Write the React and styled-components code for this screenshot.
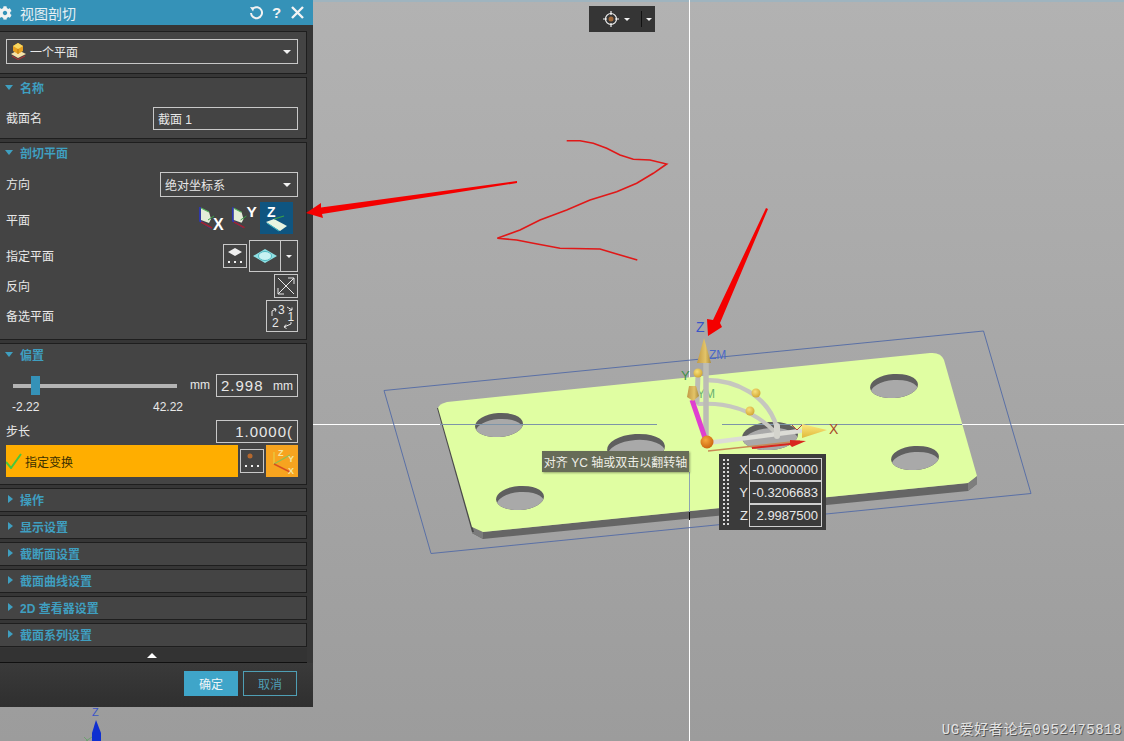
import React from 'react';
import styled, { createGlobalStyle } from 'styled-components';
import { FaCog } from 'react-icons/fa';

const GlobalStyle = createGlobalStyle`
  html, body {
    margin: 0;
    padding: 0;
    background: #a8a8a8;
    overflow: hidden;
  }
`;

const UI_FONT = `"Liberation Sans", "Noto Sans CJK SC", sans-serif`;

const Stage = styled.div`
  position: relative;
  width: 1124px;
  height: 741px;
  overflow: hidden;
  background: linear-gradient(#b2b2b2, #9c9c9c);
  font-family: ${UI_FONT};
`;

const SceneSvg = styled.svg`
  position: absolute;
  left: 0;
  top: 0;
  z-index: ${(p) => p.$z || 0};
  pointer-events: none;
`;

const Panel = styled.div`
  position: absolute;
  left: 0;
  top: 0;
  z-index: 2;
  width: 313px;
  height: 707px;
  background: #363636;
  display: flex;
  flex-direction: column;
  color: #e4e4e4;
  font-size: 12px;
`;

const TitleBar = styled.div`
  height: 25px;
  flex: none;
  background: #3592b8;
  display: flex;
  align-items: center;
  padding: 0 5px 0 0;
  color: #e6f0f4;
`;

const Gear = styled(FaCog)`
  width: 14px;
  height: 14px;
  margin-left: -2px;
  margin-right: 8px;
  color: #f2f2f2;
`;

const TitleText = styled.span`
  font-size: 14px;
  flex: 1;
`;

const TitleTool = styled.span`
  width: 21px;
  display: flex;
  justify-content: center;
  font-size: 15px;
  font-weight: 700;
  color: #f2f2f2;
`;

const Body = styled.div`
  flex: none;
  height: 623px;
  padding: 6px 0 0 0;
  box-sizing: border-box;
  display: flex;
  flex-direction: column;
  gap: 3px;
`;

const Section = styled.div`
  box-sizing: border-box;
  width: 308px;
  margin-left: -1px;
  height: ${(p) => p.$h}px;
  flex: none;
  border: 1px solid #1e1e1e;
  background: #444444;
  padding-left: 6px;
  padding-right: 8px;
`;

const SectionHead = styled.div`
  box-sizing: border-box;
  height: ${(p) => p.$h || 21}px;
  padding-bottom: 2px;
  display: flex;
  align-items: center;
  margin-left: -3px;
  color: #3f9fc0;
  font-weight: 700;
  font-size: 12px;
`;

const Caret = styled.span`
  display: inline-block;
  width: 0;
  height: 0;
  margin-right: 7px;
  ${(p) =>
    p.$open
      ? `border-left: 4px solid transparent; border-right: 4px solid transparent; border-top: 5px solid #3f9fc0; margin-left: 2px;`
      : `border-top: 4px solid transparent; border-bottom: 4px solid transparent; border-left: 5px solid #3f9fc0; margin-left: 5px;`}
`;

const Row = styled.div`
  height: ${(p) => p.$h}px;
  margin-top: ${(p) => p.$top || 0}px;
  display: flex;
  align-items: center;
  justify-content: space-between;
`;

const Group = styled.div`
  display: flex;
  align-items: ${(p) => p.$align || 'center'};
  gap: ${(p) => p.$gap || 0}px;
`;

const Label = styled.span`
  font-size: 12px;
  color: #e8e8e8;
  margin-bottom: ${(p) => (p.$low ? 0 : 2)}px;
  margin-top: ${(p) => (p.$low ? 3 : 0)}px;
`;

const Field = styled.div`
  box-sizing: border-box;
  width: ${(p) => p.$w}px;
  height: ${(p) => p.$h || 23}px;
  border: 1px solid #c8c8c8;
  display: flex;
  align-items: center;
  padding: 0 4px;
  justify-content: ${(p) => (p.$right ? 'flex-end' : 'flex-start')};
  color: #e8e8e8;
  font-size: 12px;
  overflow: hidden;
  white-space: nowrap;
`;

const NumberText = styled.span`
  font-size: 15px;
  letter-spacing: 1px;
  font-weight: 300;
`;

const SmallUnit = styled.span`
  font-size: 12px;
  margin-left: auto;
`;

const Select = styled(Field)`
  justify-content: space-between;
  padding-right: 6px;
`;

const SelectValue = styled.span`
  display: flex;
  align-items: center;
  gap: 4px;
`;

const DownTri = styled.span`
  width: 0;
  height: 0;
  border-left: ${(p) => p.$s || 4}px solid transparent;
  border-right: ${(p) => p.$s || 4}px solid transparent;
  border-top: ${(p) => p.$s || 4}px solid #f2f2f2;
`;

const IconBox = styled.div`
  box-sizing: border-box;
  width: ${(p) => p.$w}px;
  height: ${(p) => p.$h}px;
  border: 1px solid #c8c8c8;
  display: flex;
  align-items: center;
  justify-content: center;
  flex: none;
`;

const PlaneBtn = styled.div`
  width: ${(p) => p.$w}px;
  height: 32px;
  display: flex;
  align-items: center;
  justify-content: center;
  background: ${(p) => (p.$active ? '#0f5580' : 'transparent')};
`;

const Split = styled.div`
  box-sizing: border-box;
  width: 49px;
  height: 32px;
  border: 1px solid #c8c8c8;
  display: flex;
`;

const SplitMain = styled.div`
  flex: 1;
  display: flex;
  align-items: center;
  justify-content: center;
  border-right: 1px solid #c8c8c8;
`;

const SplitDrop = styled.div`
  width: 16px;
  display: flex;
  align-items: center;
  justify-content: center;
`;

const Slider = styled.div`
  position: relative;
  width: 164px;
  height: 4px;
  margin-left: 7px;
  background: #b4b4b4;
`;

const Thumb = styled.div`
  position: absolute;
  left: 18px;
  top: -8px;
  width: 9px;
  height: 19px;
  background: #3592b8;
`;

const RangeRow = styled.div`
  height: 19px;
  display: flex;
  align-items: center;
  padding-left: 6px;
  font-size: 12px;
  color: #e8e8e8;
`;

const RangeMin = styled.span`
  width: 141px;
`;

const StepBar = styled.div`
  width: 232px;
  height: 32px;
  background: #ffae00;
  display: flex;
  align-items: center;
  gap: 3px;
  color: #3a3000;
  font-size: 12px;
`;

const OrangeBtn = styled.div`
  width: 32px;
  height: 32px;
  background: #f7a41f;
  display: flex;
  align-items: center;
  justify-content: center;
`;

const ScrollStrip = styled.div`
  flex: none;
  height: 14px;
  display: flex;
  justify-content: center;
  align-items: center;
  border-bottom: 1px solid #101010;
  margin-right: 6px;
  padding-right: 4px;
  background: #333333;
`;

const UpTri = styled.span`
  width: 0;
  height: 0;
  border-left: 5px solid transparent;
  border-right: 5px solid transparent;
  border-bottom: 5px solid #ffffff;
`;

const Footer = styled.div`
  flex: 1;
  display: flex;
  justify-content: flex-end;
  gap: 5px;
  padding: 8px 16px 0 0;
  background: linear-gradient(#3a3a3a, #2f2f2f);
`;

const DialogBtn = styled.div`
  box-sizing: border-box;
  width: 54px;
  height: 25px;
  display: flex;
  align-items: center;
  justify-content: center;
  font-size: 12px;
  background: ${(p) => (p.$primary ? '#3fa5c9' : 'transparent')};
  border: 1px solid ${(p) => (p.$primary ? '#3fa5c9' : '#4f9fb5')};
  color: ${(p) => (p.$primary ? '#f0f6f8' : '#4f9fb5')};
`;

const MiniToolbar = styled.div`
  position: absolute;
  left: 589px;
  top: 6px;
  width: 66px;
  height: 26px;
  background: #353535;
  display: flex;
  align-items: center;
  z-index: 1;
`;

const MiniMain = styled.div`
  width: 50px;
  height: 16px;
  display: flex;
  align-items: center;
  justify-content: center;
  gap: 5px;
  border-right: 1px solid #111;
  padding-left: 2px;
`;

const MiniDrop = styled.div`
  flex: 1;
  display: flex;
  justify-content: center;
`;

const Tooltip = styled.div`
  position: absolute;
  left: 542px;
  top: 451px;
  width: 147px;
  height: 21px;
  background: #676c58;
  box-shadow: 1px 1px 2px rgba(0, 0, 0, 0.35);
  color: #eeeee6;
  font-size: 12px;
  display: flex;
  align-items: center;
  justify-content: center;
  white-space: nowrap;
  z-index: 1;
`;

const CoordBox = styled.div`
  position: absolute;
  left: 719px;
  top: 454px;
  width: 107px;
  height: 76px;
  box-sizing: border-box;
  background: #3b3b3b;
  display: flex;
  padding: 4px 4px 3px 3px;
  z-index: 1;
`;

const Grip = styled.div`
  width: 8px;
  background-image: radial-gradient(circle, #d8d8d8 1px, transparent 1.2px);
  background-size: 4px 4px;
`;

const CoordRows = styled.div`
  flex: 1;
  display: flex;
  flex-direction: column;
`;

const CoordRow = styled.div`
  flex: 1;
  display: flex;
  align-items: center;
  color: #e8e8e8;
  font-size: 13px;
`;

const CoordLabel = styled.span`
  width: 19px;
  text-align: right;
  margin-right: 1px;
`;

const CoordValue = styled.div`
  box-sizing: border-box;
  width: 73px;
  height: 100%;
  border: 1px solid #cfcfcf;
  margin-top: ${(p) => (p.$first ? 0 : -1)}px;
  display: flex;
  align-items: center;
  justify-content: flex-end;
  padding-right: 3px;
  background: #3b3b3b;
`;

const Watermark = styled.div`
  position: absolute;
  right: 2px;
  bottom: 3px;
  z-index: 1;
  font-family: "Liberation Mono", "Noto Sans CJK SC", monospace;
  font-size: 14px;
  letter-spacing: 0.55px;
  color: #e4e4e4;
  text-shadow: 1px 1px 0 #555;
  white-space: nowrap;
`;

// model holes: top rim ellipse plus a shifted floor
const HOLES = [
  { id: 'h1', x: 499, y: 425, rx: 24, ry: 12 },
  { id: 'h2', x: 636, y: 448, rx: 29, ry: 14 },
  { id: 'h3', x: 520, y: 498, rx: 24, ry: 12 },
  { id: 'h4', x: 894, y: 386, rx: 24, ry: 12 },
  { id: 'h5', x: 915, y: 458, rx: 24, ry: 12 },
  { id: 'h6', x: 770, y: 436, rx: 28, ry: 14 },
];

const Hole = ({ id, x, y, rx, ry }) => (
  <g transform={`rotate(-4 ${x} ${y})`}>
    <clipPath id={id}>
      <ellipse cx={x} cy={y} rx={rx} ry={ry} />
    </clipPath>
    <ellipse cx={x} cy={y} rx={rx} ry={ry} fill="#5f5f5f" />
    <ellipse cx={x} cy={y + 6} rx={rx} ry={ry} fill="#a9a9a9" clipPath={`url(#${id})`} />
  </g>
);

const Scene = () => (
  <SceneSvg width="1124" height="741" viewBox="0 0 1124 741">
    <defs>
      <linearGradient id="cone" x1="0" x2="1" y1="0" y2="0">
        <stop offset="0" stopColor="#c29a45" />
        <stop offset="0.6" stopColor="#e3c468" />
        <stop offset="1" stopColor="#a98a3e" />
      </linearGradient>
      <linearGradient id="conex" x1="0" x2="0" y1="0" y2="1">
        <stop offset="0" stopColor="#fbe97e" />
        <stop offset="1" stopColor="#e0b83c" />
      </linearGradient>
      <radialGradient id="ball" cx="0.4" cy="0.35" r="0.7">
        <stop offset="0" stopColor="#f6a83c" />
        <stop offset="1" stopColor="#c9610c" />
      </radialGradient>
      <radialGradient id="bead" cx="0.4" cy="0.35" r="0.7">
        <stop offset="0" stopColor="#f8e07a" />
        <stop offset="1" stopColor="#d0a430" />
      </radialGradient>
    </defs>

    <rect x="0" y="0" width="1124" height="2" fill="#9fb4bf" />
    <line x1="689.5" y1="0" x2="689.5" y2="741" stroke="#ffffff" strokeWidth="1" />
    <line x1="313" y1="424.5" x2="1124" y2="424.5" stroke="#ffffff" strokeWidth="1" />

    <polygon points="472,525 483,532 968,483 977,476 977,484 968,491 483,539 472,533" fill="#656565" />
    <polygon points="472,526 483,532 483,539 472,533" fill="#7a7a7a" />
    <polygon points="968,483 977,476 977,484 968,491" fill="#7d7d7d" />
    <path d="M437 408 L472 532 L474 532 L439 408 Z" fill="#4a4a4a" />
    <path
      d="M438 408 Q439 404 447 402 L930 353 Q941 352 944 360 L977 476 L968 483 L483 532 L472 527 Z"
      fill="#e0fea2"
    />
    {HOLES.map((h) => (
      <Hole key={h.id} {...h} />
    ))}

    <line x1="440" y1="424.5" x2="657" y2="424.5" stroke="#7d94a8" strokeWidth="1" />
    <line x1="722" y1="424.5" x2="962" y2="424.5" stroke="#7d94a8" strokeWidth="1" />
    <line x1="689.5" y1="472" x2="689.5" y2="512" stroke="#8da4b0" strokeWidth="1" />
    <line x1="689.5" y1="512" x2="689.5" y2="520" stroke="#111" strokeWidth="1" />
    <polygon points="384,390.5 983.5,331 1031,493.5 431,553.5" fill="none" stroke="#5a70a6" strokeWidth="1" />

    <text x="696" y="332" fontSize="14" fill="#3a55c8" fontFamily="Liberation Sans">Z</text>
    <text x="709" y="359" fontSize="12" fill="#4a68c8" fontFamily="Liberation Sans">ZM</text>
    <text x="681" y="380" fontSize="13" fill="#3f8f4a" fontFamily="Liberation Sans">Y</text>
    <text x="697" y="398" fontSize="12" fill="#6ab070" fontFamily="Liberation Sans">YM</text>
    <text x="829" y="434" fontSize="14" fill="#a84a28" fontFamily="Liberation Sans">X</text>

    <g fill="none" strokeLinecap="round">
      <path d="M706 380 C735 380 768 395 777 428" stroke="#c6c6bf" strokeWidth="4.5" />
      <path d="M699 404 C730 402 755 412 774 431" stroke="#c6c6bf" strokeWidth="4" />
      <path d="M698 375 L697 402" stroke="#bcbcb5" strokeWidth="5" />
      <path d="M706 358 L706 440" stroke="#bcbcb5" strokeWidth="5.5" />
      <path d="M707 443 L800 431" stroke="#dcdcd6" strokeWidth="4.5" />
      <path d="M777 426 L777 436" stroke="#d4d4cd" strokeWidth="6" />
    </g>
    <path d="M692 400 L705 438" stroke="#df3fd0" strokeWidth="5" fill="none" />
    <path d="M708 451 L800 441" stroke="#c98a55" strokeWidth="1.5" fill="none" />
    <path d="M752 447 L790 443 L790 440 L806 441 L792 447 L790 445 L752 449 Z" fill="#d8261e" />
    <path d="M792 425 L797 430 L802 425" stroke="#b5423a" strokeWidth="1" fill="none" />
    <polygon points="704,338 711,363 697,363" fill="url(#cone)" />
    <polygon points="689,386 696,386 699,396 693,401 687,397" fill="url(#cone)" />
    <polygon points="802,424 827,430 802,438" fill="url(#conex)" />
    <circle cx="698" cy="373" r="4.5" fill="url(#bead)" />
    <circle cx="756" cy="393" r="4.5" fill="url(#bead)" />
    <circle cx="750" cy="411" r="4.5" fill="url(#bead)" />
    <circle cx="707" cy="442" r="6.5" fill="url(#ball)" />

    <text x="92" y="716" fontSize="11" fill="#3a55c8" fontFamily="Liberation Sans">Z</text>
    <path d="M96 720 L101 733 L101 741 L92 741 L92 733 Z" fill="#0f2fd0" />
    <path d="M84 737 L88 741 M92 737 L86 741" stroke="#6fa070" strokeWidth="1" />
  </SceneSvg>
);

const SCRIBBLE = [
  [800, 32], [840, 32], [880, 40], [920, 55], [960, 75], [1000, 88], [1050, 90], [1100, 102],
  [1060, 130], [1010, 160], [950, 185], [870, 210], [800, 240], [720, 270], [660, 300], [592, 325],
  [650, 330], [700, 340], [780, 355], [900, 357], [950, 372], [1012, 390],
]
  .map(([x, y]) => `${(x / 3 + 300).toFixed(1)},${(y / 3 + 130).toFixed(1)}`)
  .join(' ');

const Annotations = () => (
  <SceneSvg width="1124" height="741" viewBox="0 0 1124 741" $z={3}>
    <polyline points={SCRIBBLE} fill="none" stroke="#e01818" strokeWidth="1.6" />
    <polygon points="517,181 517,183 322,214 323,218 306,213 321,203 321,207.5" fill="#f40000" />
    <polygon points="766,208 768,209 720,323 722,327 708,336 707,319 713,320" fill="#f40000" />
  </SceneSvg>
);

const BlockIcon = () => (
  <svg width="15" height="17" viewBox="0 0 15 17">
    <path d="M0 11 L7 7 L15 11 L7 15 Z" fill="#f6e2a8" />
    <path d="M2 3 L7 0 L12 3 L12 8 L7 11 L2 8 Z" fill="#e8a020" />
    <path d="M2 3 L7 0 L12 3 L7 6 Z" fill="#f8d860" />
    <path d="M7 6 L7 11" stroke="#b87810" strokeWidth="1" />
    <path d="M1 13 L7 16.5 L14 13" stroke="#b83030" strokeWidth="1" fill="none" />
  </svg>
);

const PlaneIcon = ({ letter, letterX, letterY }) => (
  <svg width="33" height="30" viewBox="0 0 33 30">
    <path d="M5 4 L5 18 L16 25" stroke="#2a36c8" strokeWidth="1.5" fill="none" />
    <path d="M6 17 L6 5 L14 9 L16 16 L14 20 Z" fill="#e4ecd8" />
    <path d="M6 5 L14 9" stroke="#57b060" strokeWidth="1.2" />
    <path d="M6 19 L17 25" stroke="#a0252a" strokeWidth="1.6" />
    <path d="M13 17 L19 13" stroke="#3aa048" strokeWidth="1" />
    <text x={letterX} y={letterY} fontSize="16" fontWeight="700" fill="#ffffff" fontFamily="Liberation Sans">
      {letter}
    </text>
  </svg>
);

const ZPlaneIcon = () => (
  <svg width="33" height="32" viewBox="0 0 33 32">
    <text x="7" y="15" fontSize="14" fontWeight="700" fill="#ffffff" fontFamily="Liberation Sans">Z</text>
    <path d="M6 20 L14 17 L27 24 L20 29 Z" fill="#e8f4e0" />
    <path d="M14 17 L24 14" stroke="#3aa048" strokeWidth="1.2" />
    <path d="M7 21 L19 29" stroke="#46c0c8" strokeWidth="1" />
  </svg>
);

const DotsDiamond = ({ color = '#f0f0f0' }) => (
  <svg width="20" height="18" viewBox="0 0 20 18">
    <path d="M10 1 L17 5 L10 9 L3 5 Z" fill={color} />
    <rect x="3" y="14" width="2" height="2" fill="#f0f0f0" />
    <rect x="9" y="14" width="2" height="2" fill="#f0f0f0" />
    <rect x="15" y="14" width="2" height="2" fill="#f0f0f0" />
  </svg>
);

const DotsPoint = () => (
  <svg width="20" height="20" viewBox="0 0 20 20">
    <circle cx="8" cy="5" r="2.5" fill="#b5682e" />
    <rect x="3" y="14" width="2" height="2" fill="#f0f0f0" />
    <rect x="9" y="14" width="2" height="2" fill="#f0f0f0" />
    <rect x="15" y="14" width="2" height="2" fill="#f0f0f0" />
  </svg>
);

const PlaneDisc = () => (
  <svg width="24" height="14" viewBox="0 0 24 14">
    <path d="M0 7 L12 0 L24 7 L12 14 Z" fill="#8fe0e4" />
    <ellipse cx="12" cy="7" rx="6.5" ry="4.5" fill="#c8f2f2" stroke="#4fb8c0" strokeWidth="1" />
  </svg>
);

const FlipIcon = () => (
  <svg width="22" height="22" viewBox="0 0 22 22" fill="none" stroke="#e8e8e8" strokeWidth="1">
    <path d="M3 19 L19 3 M3 3 L19 19" />
    <path d="M13 3 L19 3 L19 9 M3 13 L3 19 L9 19" />
  </svg>
);

const CycleIcon = () => (
  <svg width="30" height="30" viewBox="0 0 30 30" fill="none" stroke="#e8e8e8" strokeWidth="1">
    <text x="11" y="13" fontSize="12" fill="#e8e8e8" stroke="none" fontFamily="Liberation Sans">3</text>
    <text x="20.5" y="20" fontSize="12" fill="#e8e8e8" stroke="none" fontFamily="Liberation Sans">1</text>
    <text x="5" y="26" fontSize="12" fill="#e8e8e8" stroke="none" fontFamily="Liberation Sans">2</text>
    <path d="M5 15 L5 10 L9 8 M6.5 7.5 L9 8 L8.5 10.5" />
    <path d="M20 6 L25 9 M22 9.5 L25 9 L25 6.5" />
    <path d="M24 21 L24 23 L17 26 M19 23.5 L17 26 L19.5 27.5" />
  </svg>
);

const AxisIcon = () => (
  <svg width="28" height="28" viewBox="0 0 28 28" fill="none">
    <path d="M6 5 L6 17" stroke="#e8c840" strokeWidth="1.4" />
    <path d="M6 17 L22 8" stroke="#90c050" strokeWidth="1.4" />
    <path d="M6 17 L22 25" stroke="#d85020" strokeWidth="1.4" />
    <text x="10" y="9" fontSize="9" fontWeight="700" fill="#f6e6a0" fontFamily="Liberation Sans">Z</text>
    <text x="20" y="15" fontSize="9" fontWeight="700" fill="#f6e6a0" fontFamily="Liberation Sans">Y</text>
    <text x="20" y="27" fontSize="9" fontWeight="700" fill="#f6e6a0" fontFamily="Liberation Sans">X</text>
  </svg>
);

const Check = () => (
  <svg width="16" height="16" viewBox="0 0 16 16">
    <path d="M0 9 L5 15 L15 1" stroke="#46c83c" strokeWidth="2" fill="none" />
  </svg>
);

const ResetIcon = () => (
  <svg width="14" height="14" viewBox="0 0 14 14" fill="none" stroke="#f2f2f2" strokeWidth="2">
    <path d="M4 2.4 A5.5 5.5 0 1 1 2 7" />
    <path d="M1 1 L5.5 1.5 L4 5.5 Z" fill="#f2f2f2" stroke="none" />
  </svg>
);

const CloseIcon = () => (
  <svg width="13" height="13" viewBox="0 0 13 13" stroke="#f4f4f4" strokeWidth="2.4">
    <path d="M1 1 L12 12 M12 1 L1 12" />
  </svg>
);

const TargetIcon = () => (
  <svg width="16" height="16" viewBox="0 0 16 16" fill="none" stroke="#f4f4f4" strokeWidth="1.2">
    <circle cx="8" cy="8" r="5.5" />
    <path d="M8 0 L8 4 M8 12 L8 16 M0 8 L4 8 M12 8 L16 8" />
    <circle cx="8" cy="8" r="2.5" fill="#a0683a" stroke="none" />
  </svg>
);

const COLLAPSED = ['操作', '显示设置', '截断面设置', '截面曲线设置', '2D 查看器设置', '截面系列设置'];

const COORDS = [
  ['X', '-0.0000000'],
  ['Y', '-0.3206683'],
  ['Z', '2.9987500'],
];

export default function App() {
  return (
    <Stage>
      <GlobalStyle />
      <Scene />

      <MiniToolbar>
        <MiniMain>
          <TargetIcon />
          <DownTri $s={3} />
        </MiniMain>
        <MiniDrop>
          <DownTri $s={3} />
        </MiniDrop>
      </MiniToolbar>

      <Tooltip>对齐 YC 轴或双击以翻转轴</Tooltip>

      <CoordBox>
        <Grip />
        <CoordRows>
          {COORDS.map(([axis, value], i) => (
            <CoordRow key={axis}>
              <CoordLabel>{axis}</CoordLabel>
              <CoordValue $first={i === 0}>{value}</CoordValue>
            </CoordRow>
          ))}
        </CoordRows>
      </CoordBox>

      <Watermark>UG爱好者论坛0952475818</Watermark>

      <Panel>
        <TitleBar>
          <Gear />
          <TitleText>视图剖切</TitleText>
          <TitleTool><ResetIcon /></TitleTool>
          <TitleTool>?</TitleTool>
          <TitleTool><CloseIcon /></TitleTool>
        </TitleBar>

        <Body>
          <Section $h={43}>
            <Row $h={25} $top={7}>
              <Select $w={292} $h={25}>
                <SelectValue><BlockIcon />一个平面</SelectValue>
                <DownTri />
              </Select>
            </Row>
          </Section>

          <Section $h={62}>
            <SectionHead><Caret $open />名称</SectionHead>
            <Row $h={23} $top={8}>
              <Label>截面名</Label>
              <Field $w={145}>截面 1</Field>
            </Row>
          </Section>

          <Section $h={198}>
            <SectionHead><Caret $open />剖切平面</SectionHead>
            <Row $h={25} $top={8}>
              <Label>方向</Label>
              <Select $w={138} $h={25}>
                绝对坐标系
                <DownTri />
              </Select>
            </Row>
            <Row $h={32} $top={5}>
              <Label $low>平面</Label>
              <Group>
                <PlaneBtn $w={34}><PlaneIcon letter="X" letterX="18" letterY="27" /></PlaneBtn>
                <PlaneBtn $w={32}><PlaneIcon letter="Y" letterX="19" letterY="14" /></PlaneBtn>
                <PlaneBtn $w={33} $active><ZPlaneIcon /></PlaneBtn>
                <PlaneBtn $w={5} />
              </Group>
            </Row>
            <Row $h={32} $top={6}>
              <Label>指定平面</Label>
              <Group $gap={2}>
                <IconBox $w={24} $h={24}><DotsDiamond /></IconBox>
                <Split>
                  <SplitMain><PlaneDisc /></SplitMain>
                  <SplitDrop><DownTri $s={3} /></SplitDrop>
                </Split>
              </Group>
            </Row>
            <Row $h={24} $top={2}>
              <Label>反向</Label>
              <IconBox $w={24} $h={24}><FlipIcon /></IconBox>
            </Row>
            <Row $h={32} $top={2}>
              <Label>备选平面</Label>
              <IconBox $w={32} $h={32}><CycleIcon /></IconBox>
            </Row>
          </Section>

          <Section $h={142}>
            <SectionHead $h={22}><Caret $open />偏置</SectionHead>
            <Row $h={23} $top={8}>
              <Slider><Thumb /></Slider>
              <Group $gap={6}>
                <Label>mm</Label>
                <Field $w={82}>
                  <NumberText>2.998</NumberText>
                  <SmallUnit>mm</SmallUnit>
                </Field>
              </Group>
            </Row>
            <RangeRow>
              <RangeMin>-2.22</RangeMin>
              <span>42.22</span>
            </RangeRow>
            <Row $h={23} $top={4}>
              <Label>步长</Label>
              <Field $w={82} $right><NumberText>1.0000(</NumberText></Field>
            </Row>
            <Row $h={32} $top={2}>
              <StepBar><Check />指定变换</StepBar>
              <IconBox $w={24} $h={24}><DotsPoint /></IconBox>
              <OrangeBtn><AxisIcon /></OrangeBtn>
            </Row>
          </Section>

          {COLLAPSED.map((name) => (
            <Section $h={24} key={name}>
              <SectionHead $h={22}><Caret />{name}</SectionHead>
            </Section>
          ))}
        </Body>

        <ScrollStrip><UpTri /></ScrollStrip>

        <Footer>
          <DialogBtn $primary>确定</DialogBtn>
          <DialogBtn>取消</DialogBtn>
        </Footer>
      </Panel>

      <Annotations />
    </Stage>
  );
}
